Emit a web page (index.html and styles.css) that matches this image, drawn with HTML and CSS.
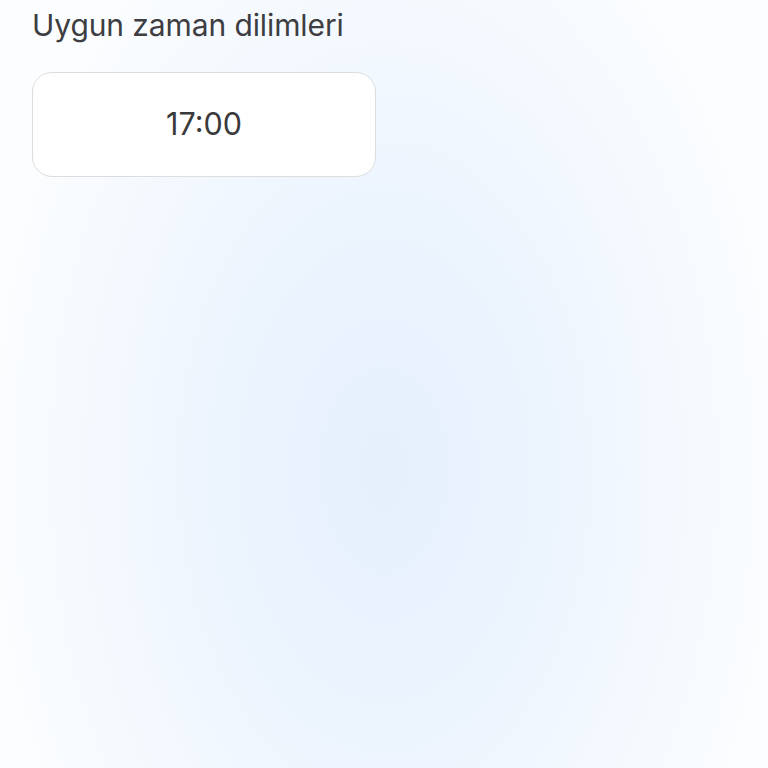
FILE: index.html
```html
<!DOCTYPE html>
<html lang="tr">
<head>
<meta charset="utf-8">
<link rel="stylesheet" href="styles.css">
</head>
<body>
<main class="page">
  <h2 class="title">Uygun zaman dilimleri</h2>
  <div class="slots">
    <button class="slot">17:00</button>
  </div>
</main>
</body>
</html>
```
FILE: styles.css
```css
html, body {
  margin: 0;
  padding: 0;
  width: 768px;
  height: 768px;
  overflow: hidden;
}
body {
  font-family: Inter, "Open Sans", "Liberation Sans", sans-serif;
  background: radial-gradient(ellipse 400px 640px at 384px 470px, #e5f0fd 0%, #ebf3fe 35%, #f2f8fe 65%, #fbfdff 100%);
  background-color: #fbfdff;
  color: #3c3c40;
}
.page {
  padding: 5px 32px 0 32px;
  display: flex;
  flex-direction: column;
  gap: 26px;
}
.title {
  margin: 0;
  font-size: 30px;
  font-weight: 400;
  line-height: 41px;
  color: #3d3d42;
  letter-spacing: -0.1px;
}
.slots {
  display: flex;
}
.slot {
  width: 344px;
  height: 105px;
  background: #ffffff;
  border: 1.5px solid #dddddd;
  border-radius: 20px;
  font-family: inherit;
  font-size: 30.5px;
  color: #3a3a3c;
  padding: 0 0 2px 0;
}
```
